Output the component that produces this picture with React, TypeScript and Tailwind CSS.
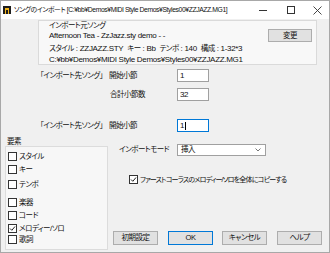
import React from "react";

const FONT = "font-['Liberation_Sans','Noto_Sans_CJK_JP',sans-serif] [font-feature-settings:'palt'] tracking-[-0.3px] whitespace-nowrap";
const JP = "text-[7.5px] tracking-[-0.5px]";

function Check({ checked, label, tight }: { checked?: boolean; label: string; tight?: boolean }) {
  return (
    <div className="flex h-[9px] items-center">
      <span className="flex h-[9px] w-[9px] shrink-0 items-center justify-center border border-[#333333] bg-white">
        {checked && (
          <svg width="7" height="7" viewBox="0 0 7 7">
            <polyline points="1,3.5 2.8,5.3 6,1.5" fill="none" stroke="#222" strokeWidth="1" />
          </svg>
        )}
      </span>
      <span className={`ml-[2px] leading-none ${tight ? "text-[7px] tracking-[-0.8px]" : JP}`}>{label}</span>
    </div>
  );
}

function Button({ label, primary }: { label: string; primary?: boolean }) {
  return (
    <div
      className={`flex h-[14px] w-[45px] items-center justify-center bg-[#e1e1e1] leading-none ${JP} ${
        primary ? "border border-[#0078d7]" : "border border-[#adadad]"
      }`}>
      {label}
    </div>
  );
}

function Field({ value, focused }: { value: string; focused?: boolean }) {
  return (
    <div
      className={`flex h-[13px] w-[32px] shrink-0 items-center bg-white pl-[2px] text-[8px] leading-none ${
        focused ? "border border-[#0078d7]" : "border border-[#a0a0a0]"
      }`}>
      {value}
      {focused && <span className="ml-[1px] h-[8px] w-[1px] bg-black" />}
    </div>
  );
}

export default function App() {
  return (
    <div className={`flex h-[253px] w-[330px] flex-col overflow-hidden border border-[#a8a8a8] bg-[#f0f0f0] text-[#111] ${FONT}`}>
      {/* title bar */}
      <div className="flex h-[18px] shrink-0 items-center bg-white">
        <svg className="ml-[2px]" width="8" height="8" viewBox="0 0 8 8">
          <rect x="0" y="0" width="8" height="8" fill="#1d1d1d" />
          <rect x="2" y="2" width="4" height="6" fill="#f2b51c" />
          <rect x="3" y="4" width="2" height="4" fill="#1d1d1d" />
        </svg>
        <span className="ml-[3px] text-[6.8px] leading-none tracking-[-0.4px]">
          ソングのインポート [C:¥bb¥Demos¥MIDI Style Demos¥Styles00¥ZZJAZZ.MG1]
        </span>
        <div className="ml-auto flex h-full items-center">
          <div className="flex w-[28px] justify-center">
            <span className="h-[1px] w-[8px] bg-[#333]" />
          </div>
          <div className="flex w-[28px] justify-center">
            <span className="h-[8px] w-[8px] border border-[#333]" />
          </div>
          <div className="flex w-[24px] justify-center">
            <svg width="9" height="9" viewBox="0 0 9 9">
              <path d="M0.5 0.5 L8.5 8.5 M8.5 0.5 L0.5 8.5" stroke="#333" strokeWidth="0.9" />
            </svg>
          </div>
        </div>
      </div>

      {/* source song panel */}
      <div className="ml-[37px] mr-[12px] mt-[1px] flex h-[45px] border border-[#dadada] bg-[#f8f8f8]">
        <div className="flex flex-col pl-[10px] text-[8px]">
          <div className={`flex h-[10px] items-center ${JP}`}>インポート元ソング</div>
          <div className="flex h-[10px] items-center">Afternoon Tea - ZzJazz.sty demo - -</div>
          <div className="mt-[2px] flex h-[11px] items-center">
            <span className={JP}>スタイル</span>&nbsp;: ZZJAZZ.STY&nbsp;&nbsp;<span className={JP}>キー</span>&nbsp;: Bb&nbsp;&nbsp;
            <span className={JP}>テンポ</span>&nbsp;: 140&nbsp;&nbsp;<span className={JP}>構成</span>&nbsp;: 1-32*3
          </div>
          <div className="flex h-[11px] items-center">C:¥bb¥Demos¥MIDI Style Demos¥Styles00¥ZZJAZZ.MG1</div>
        </div>
        <div className="ml-auto mr-[4px] mt-[8px]">
          <div className={`flex h-[13px] w-[44px] items-center justify-center border border-[#adadad] bg-[#e1e1e1] leading-none ${JP}`}>
            変更
          </div>
        </div>
      </div>

      {/* bar rows */}
      <div className={`mt-[4px] flex h-[13px] items-center ${JP}`}>
        <span className="ml-[39px] w-[69px] shrink-0">「インポート先ソング」</span>
        <span className="w-[68px] shrink-0">開始小節</span>
        <Field value="1" />
      </div>
      <div className={`mt-[6px] flex h-[13px] items-center ${JP}`}>
        <span className="ml-[109px] w-[67px] shrink-0">合計小節数</span>
        <Field value="32" />
      </div>
      <div className={`mt-[18px] flex h-[13px] items-center ${JP}`}>
        <span className="ml-[39px] w-[69px] shrink-0">「インポート先ソング」</span>
        <span className="w-[68px] shrink-0">開始小節</span>
        <Field value="1" focused />
      </div>

      {/* lower section */}
      <div className="mt-[5px] flex h-[113px]">
        <div className="ml-[4px] flex w-[103px] flex-col">
          <div className={`flex h-[9px] items-center pl-[2px] ${JP}`}>要素</div>
          <div className="flex flex-1 flex-col border border-[#dcdcdc] bg-[#f7f7f7] pl-[2px]">
            <div className="mt-[5px]"><Check label="スタイル" /></div>
            <div className="mt-[4px]"><Check label="キー" /></div>
            <div className="mt-[6px]"><Check label="テンポ" /></div>
            <div className="mt-[9px]"><Check label="楽器" /></div>
            <div className="mt-[4px]"><Check label="コード" /></div>
            <div className="mt-[4px]"><Check checked label="メロディー/ソロ" /></div>
            <div className="mt-[2px]"><Check label="歌詞" /></div>
          </div>
        </div>

        <div className="flex flex-1 flex-col">
          <div className={`mt-[7px] flex h-[12px] items-center ${JP}`}>
            <span className="ml-[11px] w-[58px] shrink-0">インポートモード</span>
            <div className="flex h-[12px] w-[89px] items-center border border-[#a0a0a0] bg-white pl-[3px] leading-none">
              挿入
              <svg className="ml-auto mr-[4px]" width="6" height="4" viewBox="0 0 6 4">
                <polyline points="0.5,0.5 3,3 5.5,0.5" fill="none" stroke="#555" strokeWidth="0.8" />
              </svg>
            </div>
          </div>
          <div className="ml-[21px] mt-[19px]">
            <Check checked tight label="ファーストコーラスのメロディー/ソロを全体にコピーする" />
          </div>
          <div className="mb-[5px] mt-auto flex">
            <div className="ml-[5px]"><Button label="初期設定" /></div>
            <div className="ml-[10px]"><Button label="OK" primary /></div>
            <div className="ml-[9px]"><Button label="キャンセル" /></div>
            <div className="ml-[10px]"><Button label="ヘルプ" /></div>
          </div>
        </div>
      </div>
    </div>
  );
}
